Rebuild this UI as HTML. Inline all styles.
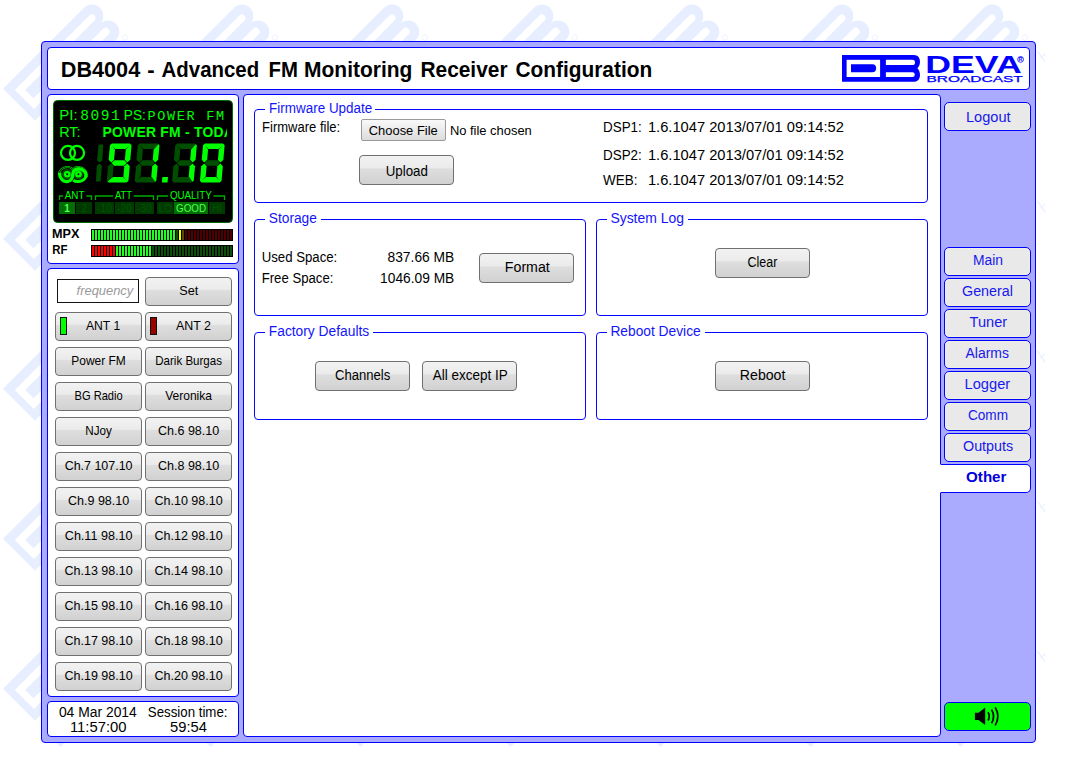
<!DOCTYPE html>
<html><head><meta charset="utf-8"><title>DB4004</title>
<style>
*{box-sizing:border-box;margin:0;padding:0}
html,body{width:1077px;height:784px;overflow:hidden;background:#fff}
body{font-family:"Liberation Sans",sans-serif;font-size:13px;color:#000;position:relative}
#wm,#tx{position:absolute;left:0;top:0;width:1077px;height:784px}
#wrap{position:absolute;left:41px;top:41px;width:995px;height:702px;background:#aaaaff;border:1px solid #0000ff;border-radius:4px}
.box{position:absolute;background:#fff;border:1px solid #0000ff;border-radius:4px}
.btn{position:absolute;height:29px;width:87px;border:1px solid #707070;border-radius:4px;background:linear-gradient(#f2f2f2 0%,#ebebeb 42%,#dedede 46%,#d1d1d1 100%)}
.btn.big{width:95px;height:30px}
.nav{position:absolute;left:944px;width:87px;height:29px;background:#e9e9e9;border:1px solid #0000ff;border-radius:5px;box-shadow:inset 0 0 0 1px #efefe4}
.fs{position:absolute;border:1px solid #0606ff;border-radius:4px}
.lg{position:absolute;background:#fff;height:4px}
.led{position:absolute;width:6.5px;height:18px;border:1px solid #111}
</style></head><body>
<svg id="wm" width="1077" height="784"><defs><pattern id="wmp" width="150" height="150" patternUnits="userSpaceOnUse"><g transform="translate(3,88.8) rotate(-45) scale(1.6)"><path d="M0,0 H71.63 A7.07 7.07 0 0 1 71.63,14.14 A7.07 7.07 0 0 1 71.63,28.28 H0 Z" fill="#e7eeff"/><rect x="4.7" y="5.75" width="33.5" height="16.85" fill="#fff"/><path d="M9.3,10.3 H30.5 A3.7 3.7 0 0 1 30.5,17.7 H9.3 Z" fill="#e7eeff"/><path d="M44,5.75 H70.6 A2.28 2.28 0 0 1 70.6,10.3 H44 Z" fill="#fff"/><path d="M44,17.7 H70.6 A2.45 2.45 0 0 1 70.6,22.6 H44 Z" fill="#fff"/><circle cx="76.5" cy="31.2" r="1.7" fill="none" stroke="#e7eeff" stroke-width="0.5"/></g><polygon points="55.6,141.9 65.6,141.9 60.6,146.9" fill="#e7eeff"/><path d="M137.2,50.8 L145.2,62 M145.3,53.8 L140.4,58.2" stroke="#edf2ff" stroke-width="1.5" fill="none"/></pattern></defs><rect width="1050" height="750" fill="url(#wmp)"/></svg>
<div id="wrap"></div>
<div class="box" style="left:47px;top:47px;width:983px;height:43px;"></div>
<svg style="position:absolute;left:836px;top:50px" width="194" height="38" viewBox="836 50 194 38" font-family="Liberation Sans, sans-serif"><path d="M842,55 H914 C917.6,55 920,57.8 920,61.5 C920,65 918.6,67.2 917.3,68.2 C918.6,69.2 920,71.5 920,75 C920,79 917.5,81.8 914,81.8 H842 Z" fill="#0000ff"/><rect x="846.6" y="59.8" width="33.5" height="17.2" fill="#fff"/><path d="M851,64.3 H872.5 A3.6 4 0 0 1 872.5,72.3 H851 Z" fill="#0000ff"/><path d="M885.9,59.8 H912.4 A2.6 2.6 0 0 1 912.4,65 H885.9 Z" fill="#fff"/><path d="M885.9,72.3 H912.4 A2.4 2.35 0 0 1 912.4,77 H885.9 Z" fill="#fff"/><text x="925.3" y="72.8" font-size="24.4" font-weight="bold" fill="#0000ff" textLength="96.5" lengthAdjust="spacingAndGlyphs">DEVA</text><text x="926.4" y="81.9" font-size="8.6" fill="#0000ff" stroke="#0000ff" stroke-width="0.25" textLength="96.4" lengthAdjust="spacingAndGlyphs">BROADCAST</text><circle cx="1020.6" cy="59.4" r="2.9" fill="#fff" stroke="#0000ff" stroke-width="0.8"/><text x="1020.6" y="61.2" font-size="5" font-weight="bold" fill="#0000ff" text-anchor="middle">R</text></svg>

<div class="box" style="left:47px;top:94px;width:192px;height:170px;"></div>
<div class="box" style="left:47px;top:268px;width:192px;height:429px;"></div>
<div class="box" style="left:47px;top:701px;width:192px;height:36px;"></div>
<div class="box" style="left:243px;top:94px;width:698px;height:643px;"></div>
<svg style="position:absolute;left:53px;top:100px" width="180" height="123" viewBox="53 100 180 123" font-family="Liberation Sans, sans-serif"><rect x="53.5" y="100.5" width="179" height="122" rx="4" fill="#000" stroke="#006a00" stroke-width="1"/><text x="59.2" y="119.8" font-size="14.5" fill="#00ff00" textLength="18.4" lengthAdjust="spacingAndGlyphs">PI:</text><text x="80.2" y="119.8" font-size="14.5" fill="#00ff00" font-family="Liberation Mono, monospace" letter-spacing="1.6">8091</text><text x="123.8" y="119.8" font-size="14.5" fill="#00ff00" textLength="22" lengthAdjust="spacingAndGlyphs">PS:</text><text x="147.4" y="119.8" font-size="13.5" fill="#00ff00" font-family="Liberation Mono, monospace" letter-spacing="1.7">POWER FM</text><text x="59.2" y="136.7" font-size="14.2" fill="#00ff00" textLength="21.4" lengthAdjust="spacingAndGlyphs">RT:</text><clipPath id="rtc"><rect x="100" y="122" width="127" height="20"/></clipPath><text x="102.5" y="137" font-size="13.9" letter-spacing="0.25" font-weight="bold" fill="#00ff00" clip-path="url(#rtc)">POWER FM - TODAY</text><circle cx="68" cy="152.9" r="7" fill="none" stroke="#00ff00" stroke-width="2.2"/><circle cx="77" cy="152.9" r="7" fill="none" stroke="#00ff00" stroke-width="2.2"/><path d="M58.300000000000004 175.3 A8.9 8.9 0 0 1 74.9 170.9" fill="none" stroke="#00b000" stroke-width="1"/><path d="M70.7 170.9 A8.9 8.9 0 0 1 87.30000000000001 175.3" fill="none" stroke="#00b000" stroke-width="1"/><path d="M60.1 175.3 A7.1 7.1 0 0 1 73.1 170.9" fill="none" stroke="#00b000" stroke-width="1"/><path d="M72.50000000000001 170.9 A7.1 7.1 0 0 1 85.5 175.3" fill="none" stroke="#00b000" stroke-width="1"/><circle cx="67.2" cy="174.3" r="5.2" fill="#005000"/><circle cx="78.4" cy="174.3" r="5.2" fill="#005000"/><path d="M86.0,177 C86.6,171.5 82.5,168.8 78.6,169.0 C74.2,169.3 72.9,172 72.8,174.3 C72.7,177.5 71.2,181.4 67.2,181.6 C62.5,181.8 59.4,177.5 59.6,172.8" fill="none" stroke="#00ff00" stroke-width="3.3"/><path d="M73.2,180.3 C76,182.3 84.5,182.6 86.2,175.5" fill="none" stroke="#00ff00" stroke-width="3"/><circle cx="67.2" cy="174.3" r="3.3" fill="#00ff00"/><circle cx="67.2" cy="174.3" r="1.0" fill="#000"/><circle cx="78.4" cy="174.3" r="3.3" fill="#00ff00"/><circle cx="78.4" cy="174.3" r="1.0" fill="#000"/><polygon points="98.6,144.6 103.3,144.6 102.3,160.5 99.6,162.6 97.1,160.5" fill="#004f00"/><polygon points="99.4,163.6 101.9,165.7 100.6,181.4 95.9,181.4 96.9,165.7" fill="#004f00"/><polygon points="111.84,143.60 129.94,143.60 130.95,144.70 125.37,149.00 115.47,149.00 110.65,144.70" fill="#00ff00"/><polygon points="108.45,182.40 126.55,182.40 127.75,181.30 122.92,177.00 113.02,177.00 107.45,181.30" fill="#00ff00"/><polygon points="109.94,145.35 111.14,144.25 114.98,149.45 114.07,159.85 111.14,162.55 108.67,159.85" fill="#00ff00"/><polygon points="131.54,145.35 130.54,144.25 125.78,149.45 124.87,159.85 127.34,162.55 130.27,159.85" fill="#00ff00"/><polygon points="106.85,180.65 107.86,181.75 112.61,176.55 113.52,166.15 111.06,163.45 108.12,166.15" fill="#004f00"/><polygon points="128.45,180.65 127.26,181.75 123.41,176.55 124.32,166.15 127.26,163.45 129.72,166.15" fill="#00ff00"/><polygon points="111.55,163.00 114.48,160.30 124.38,160.30 126.85,163.00 123.91,165.70 114.01,165.70" fill="#00ff00"/><polygon points="139.74,143.60 157.84,143.60 158.85,144.70 153.27,149.00 143.37,149.00 138.55,144.70" fill="#004f00"/><polygon points="136.35,182.40 154.45,182.40 155.65,181.30 150.82,177.00 140.92,177.00 135.35,181.30" fill="#004f00"/><polygon points="137.84,145.35 139.04,144.25 142.88,149.45 141.97,159.85 139.04,162.55 136.57,159.85" fill="#004f00"/><polygon points="159.44,145.35 158.44,144.25 153.68,149.45 152.77,159.85 155.24,162.55 158.17,159.85" fill="#00ff00"/><polygon points="134.75,180.65 135.76,181.75 140.51,176.55 141.42,166.15 138.96,163.45 136.02,166.15" fill="#004f00"/><polygon points="156.35,180.65 155.16,181.75 151.31,176.55 152.22,166.15 155.16,163.45 157.62,166.15" fill="#00ff00"/><polygon points="139.45,163.00 142.38,160.30 152.28,160.30 154.75,163.00 151.81,165.70 141.91,165.70" fill="#004f00"/><polygon points="177.14,143.60 195.24,143.60 196.25,144.70 190.67,149.00 180.77,149.00 175.95,144.70" fill="#004f00"/><polygon points="173.75,182.40 191.85,182.40 193.05,181.30 188.22,177.00 178.32,177.00 172.75,181.30" fill="#004f00"/><polygon points="175.24,145.35 176.44,144.25 180.28,149.45 179.37,159.85 176.44,162.55 173.97,159.85" fill="#004f00"/><polygon points="196.84,145.35 195.84,144.25 191.08,149.45 190.17,159.85 192.64,162.55 195.57,159.85" fill="#00ff00"/><polygon points="172.15,180.65 173.16,181.75 177.91,176.55 178.82,166.15 176.36,163.45 173.42,166.15" fill="#004f00"/><polygon points="193.75,180.65 192.56,181.75 188.71,176.55 189.62,166.15 192.56,163.45 195.02,166.15" fill="#00ff00"/><polygon points="176.85,163.00 179.78,160.30 189.68,160.30 192.15,163.00 189.21,165.70 179.31,165.70" fill="#004f00"/><polygon points="204.94,143.60 223.04,143.60 224.05,144.70 218.47,149.00 208.57,149.00 203.75,144.70" fill="#00ff00"/><polygon points="201.55,182.40 219.65,182.40 220.85,181.30 216.02,177.00 206.12,177.00 200.55,181.30" fill="#00ff00"/><polygon points="203.04,145.35 204.24,144.25 208.08,149.45 207.17,159.85 204.24,162.55 201.77,159.85" fill="#00ff00"/><polygon points="224.64,145.35 223.64,144.25 218.88,149.45 217.97,159.85 220.44,162.55 223.37,159.85" fill="#00ff00"/><polygon points="199.95,180.65 200.96,181.75 205.71,176.55 206.62,166.15 204.16,163.45 201.22,166.15" fill="#00ff00"/><polygon points="221.55,180.65 220.36,181.75 216.51,176.55 217.42,166.15 220.36,163.45 222.82,166.15" fill="#00ff00"/><polygon points="204.65,163.00 207.58,160.30 217.48,160.30 219.95,163.00 217.01,165.70 207.11,165.70" fill="#004f00"/><polygon points="162.4,176.9 168,176.9 167.5,182.4 161.9,182.4" fill="#00ff00"/><path d="M59.5 200 V196 H63 M86.3 196 H91.5 V200" fill="none" stroke="#00aa00" stroke-width="1.3"/><text x="64.8" y="199.2" font-size="11.3" fill="#00ff00" textLength="19.699999999999996" lengthAdjust="spacingAndGlyphs">ANT</text><path d="M95.5 200 V196 H113.1 M133.8 196 H153.5 V200" fill="none" stroke="#00aa00" stroke-width="1.3"/><text x="114.89999999999999" y="199.2" font-size="11.3" fill="#00ff00" textLength="17.100000000000016" lengthAdjust="spacingAndGlyphs">ATT</text><path d="M157.5 200 V196 H168.1 M213.5 196 H224.5 V200" fill="none" stroke="#00aa00" stroke-width="1.3"/><text x="169.9" y="199.2" font-size="11.3" fill="#00ff00" textLength="41.800000000000004" lengthAdjust="spacingAndGlyphs">QUALITY</text><rect x="59" y="202" width="16" height="12" fill="#006e00"/><text x="67.0" y="211.8" font-size="10" font-weight="bold" fill="#55ff55" text-anchor="middle">1</text><rect x="76" y="202" width="16" height="12" fill="#003a00"/><text x="84.0" y="211.8" font-size="10" font-weight="normal" fill="#005400" text-anchor="middle">2</text><rect x="95" y="202" width="19" height="12" fill="#003a00"/><text x="104.5" y="211.8" font-size="10" font-weight="normal" fill="#005400" text-anchor="middle">-10</text><rect x="115" y="202" width="19" height="12" fill="#003a00"/><text x="124.5" y="211.8" font-size="10" font-weight="normal" fill="#005400" text-anchor="middle">-20</text><rect x="135" y="202" width="19" height="12" fill="#003a00"/><text x="144.5" y="211.8" font-size="10" font-weight="normal" fill="#005400" text-anchor="middle">-30</text><rect x="157" y="202" width="16.5" height="12" fill="#003a00"/><text x="165.25" y="211.8" font-size="10" font-weight="normal" fill="#005400" text-anchor="middle">LO</text><rect x="174" y="202" width="34" height="12" fill="#006e00"/><text x="191.0" y="211.8" font-size="10.6" font-weight="normal" fill="#55ff55" text-anchor="middle" textLength="30" lengthAdjust="spacingAndGlyphs">GOOD</text><rect x="209" y="202" width="16" height="12" fill="#003a00"/><text x="217.0" y="211.8" font-size="10" font-weight="normal" fill="#005400" text-anchor="middle">HI</text></svg>
<div style="position:absolute;left:91px;top:229px;width:142px;height:12px;background:#000"></div>
<div style="position:absolute;left:92px;top:230px;width:84px;height:10px;background:repeating-linear-gradient(90deg,#22ff22 0,#22ff22 2px,#000 2px,#000 3px)"></div>
<div style="position:absolute;left:176px;top:230px;width:3px;height:10px;background:repeating-linear-gradient(90deg,#0b4f0b 0,#0b4f0b 2px,#000 2px,#000 3px)"></div>
<div style="position:absolute;left:179px;top:230px;width:3px;height:10px;background:repeating-linear-gradient(90deg,#ffff00 0,#ffff00 2px,#000 2px,#000 3px)"></div>
<div style="position:absolute;left:182px;top:230px;width:3px;height:10px;background:repeating-linear-gradient(90deg,#555000 0,#555000 2px,#000 2px,#000 3px)"></div>
<div style="position:absolute;left:185px;top:230px;width:48px;height:10px;background:repeating-linear-gradient(90deg,#500000 0,#500000 2px,#000 2px,#000 3px)"></div>
<div style="position:absolute;left:91px;top:245px;width:142px;height:12px;background:#000"></div>
<div style="position:absolute;left:92px;top:246px;width:24px;height:10px;background:repeating-linear-gradient(90deg,#ff0000 0,#ff0000 2px,#000 2px,#000 3px)"></div>
<div style="position:absolute;left:116px;top:246px;width:36px;height:10px;background:repeating-linear-gradient(90deg,#22ff22 0,#22ff22 2px,#000 2px,#000 3px)"></div>
<div style="position:absolute;left:152px;top:246px;width:81px;height:10px;background:repeating-linear-gradient(90deg,#0b4f0b 0,#0b4f0b 2px,#000 2px,#000 3px)"></div>
<svg style="position:absolute;left:50px;top:226px" width="40" height="34" viewBox="50 226 40 34" font-family="Liberation Sans, sans-serif" font-weight="bold" font-size="12"><text x="52" y="238" textLength="27.4" lengthAdjust="spacingAndGlyphs">MPX</text><text x="52.2" y="254" textLength="15.2" lengthAdjust="spacingAndGlyphs">RF</text></svg>

<div style="position:absolute;left:57px;top:279px;width:82px;height:24px;border:1px solid #141414;background:#fff"></div>
<div class="btn " style="left:145px;top:277px"></div>
<div class="btn " style="left:55px;top:312px"></div>
<div class="led" style="left:60px;top:317px;background:#00ff00"></div>
<div class="btn " style="left:145px;top:312px"></div>
<div class="led" style="left:150px;top:317px;background:#990000"></div>
<div class="btn " style="left:55px;top:347px"></div>
<div class="btn " style="left:145px;top:347px"></div>
<div class="btn " style="left:55px;top:382px"></div>
<div class="btn " style="left:145px;top:382px"></div>
<div class="btn " style="left:55px;top:417px"></div>
<div class="btn " style="left:145px;top:417px"></div>
<div class="btn " style="left:55px;top:452px"></div>
<div class="btn " style="left:145px;top:452px"></div>
<div class="btn " style="left:55px;top:487px"></div>
<div class="btn " style="left:145px;top:487px"></div>
<div class="btn " style="left:55px;top:522px"></div>
<div class="btn " style="left:145px;top:522px"></div>
<div class="btn " style="left:55px;top:557px"></div>
<div class="btn " style="left:145px;top:557px"></div>
<div class="btn " style="left:55px;top:592px"></div>
<div class="btn " style="left:145px;top:592px"></div>
<div class="btn " style="left:55px;top:627px"></div>
<div class="btn " style="left:145px;top:627px"></div>
<div class="btn " style="left:55px;top:662px"></div>
<div class="btn " style="left:145px;top:662px"></div>
<div class="fs" style="left:254px;top:109px;width:674px;height:94px"></div><div class="lg" style="left:265px;top:108px;width:110.39999999999998px"></div>
<div class="fs" style="left:254px;top:219px;width:332px;height:97px"></div><div class="lg" style="left:265px;top:218px;width:56.10000000000002px"></div>
<div class="fs" style="left:596px;top:219px;width:332px;height:97px"></div><div class="lg" style="left:607px;top:218px;width:81px"></div>
<div class="fs" style="left:254px;top:332px;width:332px;height:88px"></div><div class="lg" style="left:265px;top:331px;width:108.10000000000002px"></div>
<div class="fs" style="left:596px;top:332px;width:332px;height:88px"></div><div class="lg" style="left:607px;top:331px;width:98.29999999999995px"></div>
<div style="position:absolute;left:361px;top:119px;width:85px;height:22px;border:1px solid #9a9a9a;border-radius:2px;background:linear-gradient(#f9f9f9,#dcdcdc)"></div>
<div class="btn big" style="left:359px;top:155px"></div>
<div class="btn big" style="left:479px;top:253px"></div>
<div class="btn big" style="left:715px;top:248px"></div>
<div class="btn big" style="left:315px;top:361px"></div>
<div class="btn big" style="left:422px;top:361px"></div>
<div class="btn big" style="left:715px;top:361px"></div>
<div class="nav" style="top:102px"></div>
<div class="nav" style="top:247px"></div>
<div class="nav" style="top:278px"></div>
<div class="nav" style="top:309px"></div>
<div class="nav" style="top:340px"></div>
<div class="nav" style="top:371px"></div>
<div class="nav" style="top:402px"></div>
<div class="nav" style="top:433px"></div>
<div class="nav" style="left:940px;width:91px;top:464px;background:#fff;border-left:1px solid #fff;border-radius:0 5px 5px 0;box-shadow:none"></div>
<div class="nav" style="top:702px;background:#00ff00;box-shadow:none"><svg style="position:absolute;left:26px;top:2px" width="32" height="24" viewBox="971 705 32 24"><path d="M974.9,712.8 H978.5 L985.2,707.6 V725.1 L978.5,719.9 H974.9 Z" fill="#000"/><path d="M988,712.3 Q990.6,716.4 988,720.5 M991.6,709.6 Q995.6,716.4 991.6,723.2 M995.2,707.4 Q1000.6,716.4 995.2,725.4" fill="none" stroke="#000" stroke-width="1.7" stroke-linecap="butt"/></svg></div>
<svg id="tx" width="1077" height="784" font-family="Liberation Sans, sans-serif" font-size="14" fill="#000">
<text y="76.8" font-size="21.4" font-weight="bold" x="60.8" textLength="79.4" lengthAdjust="spacingAndGlyphs">DB4004</text>
<text y="76.8" font-size="21.4" font-weight="bold" x="147.2" textLength="7.4" lengthAdjust="spacingAndGlyphs">-</text>
<text y="76.8" font-size="21.4" font-weight="bold" x="161.6" textLength="97.5" lengthAdjust="spacingAndGlyphs">Advanced</text>
<text y="76.8" font-size="21.4" font-weight="bold" x="268.6" textLength="29.4" lengthAdjust="spacingAndGlyphs">FM</text>
<text y="76.8" font-size="21.4" font-weight="bold" x="304.1" textLength="108.2" lengthAdjust="spacingAndGlyphs">Monitoring</text>
<text y="76.8" font-size="21.4" font-weight="bold" x="420.5" textLength="87.0" lengthAdjust="spacingAndGlyphs">Receiver</text>
<text y="76.8" font-size="21.4" font-weight="bold" x="515.4" textLength="136.8" lengthAdjust="spacingAndGlyphs">Configuration</text>
<text y="294.7" font-size="13.3" font-style="italic" fill="#9a9a9a" x="76.6" textLength="56.7" lengthAdjust="spacingAndGlyphs">frequency</text>
<text y="294.8" font-size="12.6" x="188.7" text-anchor="middle" textLength="19.0" lengthAdjust="spacingAndGlyphs">Set</text>
<text y="329.8" font-size="12.6" x="103.1" text-anchor="middle" textLength="34.2" lengthAdjust="spacingAndGlyphs">ANT 1</text>
<text y="329.8" font-size="12.6" x="193.5" text-anchor="middle" textLength="35.0" lengthAdjust="spacingAndGlyphs">ANT 2</text>
<text y="364.7" font-size="12.6" x="98.6" text-anchor="middle" textLength="54.5" lengthAdjust="spacingAndGlyphs">Power FM</text>
<text y="364.7" font-size="12.6" x="188.6" text-anchor="middle" textLength="66.6" lengthAdjust="spacingAndGlyphs">Darik Burgas</text>
<text y="399.7" font-size="12.6" x="98.6" text-anchor="middle" textLength="48.1" lengthAdjust="spacingAndGlyphs">BG Radio</text>
<text y="399.7" font-size="12.6" x="188.6" text-anchor="middle" textLength="46.8" lengthAdjust="spacingAndGlyphs">Veronika</text>
<text y="434.7" font-size="12.6" x="98.6" text-anchor="middle" textLength="26.6" lengthAdjust="spacingAndGlyphs">NJoy</text>
<text y="434.7" font-size="12.6" x="188.6" text-anchor="middle" textLength="61.3" lengthAdjust="spacingAndGlyphs">Ch.6 98.10</text>
<text y="469.7" font-size="12.6" x="98.6" text-anchor="middle" textLength="67.9" lengthAdjust="spacingAndGlyphs">Ch.7 107.10</text>
<text y="469.7" font-size="12.6" x="188.6" text-anchor="middle" textLength="61.3" lengthAdjust="spacingAndGlyphs">Ch.8 98.10</text>
<text y="504.7" font-size="12.6" x="98.6" text-anchor="middle" textLength="61.3" lengthAdjust="spacingAndGlyphs">Ch.9 98.10</text>
<text y="504.7" font-size="12.6" x="188.6" text-anchor="middle" textLength="68.3" lengthAdjust="spacingAndGlyphs">Ch.10 98.10</text>
<text y="539.7" font-size="12.6" x="98.6" text-anchor="middle" textLength="67.6" lengthAdjust="spacingAndGlyphs">Ch.11 98.10</text>
<text y="539.7" font-size="12.6" x="188.6" text-anchor="middle" textLength="68.3" lengthAdjust="spacingAndGlyphs">Ch.12 98.10</text>
<text y="574.7" font-size="12.6" x="98.6" text-anchor="middle" textLength="68.3" lengthAdjust="spacingAndGlyphs">Ch.13 98.10</text>
<text y="574.7" font-size="12.6" x="188.6" text-anchor="middle" textLength="68.3" lengthAdjust="spacingAndGlyphs">Ch.14 98.10</text>
<text y="609.7" font-size="12.6" x="98.6" text-anchor="middle" textLength="68.3" lengthAdjust="spacingAndGlyphs">Ch.15 98.10</text>
<text y="609.7" font-size="12.6" x="188.6" text-anchor="middle" textLength="68.3" lengthAdjust="spacingAndGlyphs">Ch.16 98.10</text>
<text y="644.7" font-size="12.6" x="98.6" text-anchor="middle" textLength="68.3" lengthAdjust="spacingAndGlyphs">Ch.17 98.10</text>
<text y="644.7" font-size="12.6" x="188.6" text-anchor="middle" textLength="68.3" lengthAdjust="spacingAndGlyphs">Ch.18 98.10</text>
<text y="679.7" font-size="12.6" x="98.6" text-anchor="middle" textLength="68.3" lengthAdjust="spacingAndGlyphs">Ch.19 98.10</text>
<text y="679.7" font-size="12.6" x="188.6" text-anchor="middle" textLength="68.3" lengthAdjust="spacingAndGlyphs">Ch.20 98.10</text>
<text y="716.7" font-size="13.8" x="58.9" textLength="77.9" lengthAdjust="spacingAndGlyphs">04 Mar 2014</text>
<text y="731.7" font-size="13.8" x="69.9" textLength="56.6" lengthAdjust="spacingAndGlyphs">11:57:00</text>
<text y="716.7" font-size="13.8" x="147.8" textLength="79.7" lengthAdjust="spacingAndGlyphs">Session time:</text>
<text y="731.7" font-size="13.8" x="170.0" textLength="36.9" lengthAdjust="spacingAndGlyphs">59:54</text>
<text y="112.7" font-size="14" fill="#1414fa" x="269.1" textLength="103.2" lengthAdjust="spacingAndGlyphs">Firmware Update</text>
<text y="222.7" font-size="14" fill="#1414fa" x="268.8" textLength="48.1" lengthAdjust="spacingAndGlyphs">Storage</text>
<text y="222.7" font-size="14" fill="#1414fa" x="610.4" textLength="73.6" lengthAdjust="spacingAndGlyphs">System Log</text>
<text y="335.7" font-size="14" fill="#1414fa" x="268.8" textLength="100.4" lengthAdjust="spacingAndGlyphs">Factory Defaults</text>
<text y="335.7" font-size="14" fill="#1414fa" x="610.4" textLength="90.3" lengthAdjust="spacingAndGlyphs">Reboot Device</text>
<text y="131.8" font-size="14" x="262.1" textLength="78.1" lengthAdjust="spacingAndGlyphs">Firmware file:</text>
<text y="134.8" font-size="13.33" x="368.8" textLength="68.9" lengthAdjust="spacingAndGlyphs">Choose File</text>
<text y="134.8" font-size="13.33" x="449.9" textLength="81.9" lengthAdjust="spacingAndGlyphs">No file chosen</text>
<text y="175.6" font-size="14" x="406.8" text-anchor="middle" textLength="42.2" lengthAdjust="spacingAndGlyphs">Upload</text>
<text y="131.8" font-size="14" x="603.0" textLength="38.8" lengthAdjust="spacingAndGlyphs">DSP1:</text>
<text y="131.8" font-size="14" x="647.9" textLength="196.0" lengthAdjust="spacingAndGlyphs">1.6.1047 2013/07/01 09:14:52</text>
<text y="159.6" font-size="14" x="603.0" textLength="38.8" lengthAdjust="spacingAndGlyphs">DSP2:</text>
<text y="159.6" font-size="14" x="647.9" textLength="196.0" lengthAdjust="spacingAndGlyphs">1.6.1047 2013/07/01 09:14:52</text>
<text y="185.2" font-size="14" x="603.0" textLength="34.4" lengthAdjust="spacingAndGlyphs">WEB:</text>
<text y="185.2" font-size="14" x="647.9" textLength="196.0" lengthAdjust="spacingAndGlyphs">1.6.1047 2013/07/01 09:14:52</text>
<text y="262.4" font-size="14" x="261.7" textLength="75.6" lengthAdjust="spacingAndGlyphs">Used Space:</text>
<text y="262.4" font-size="14" x="387.5" textLength="66.8" lengthAdjust="spacingAndGlyphs">837.66 MB</text>
<text y="283.1" font-size="14" x="261.7" textLength="71.7" lengthAdjust="spacingAndGlyphs">Free Space:</text>
<text y="283.1" font-size="14" x="380.1" textLength="74.2" lengthAdjust="spacingAndGlyphs">1046.09 MB</text>
<text y="271.8" font-size="14" x="527.3" text-anchor="middle" textLength="44.9" lengthAdjust="spacingAndGlyphs">Format</text>
<text y="267.1" font-size="14" x="762.5" text-anchor="middle" textLength="29.8" lengthAdjust="spacingAndGlyphs">Clear</text>
<text y="380" font-size="14" x="362.7" text-anchor="middle" textLength="55.2" lengthAdjust="spacingAndGlyphs">Channels</text>
<text y="380" font-size="14" x="470.2" text-anchor="middle" textLength="74.9" lengthAdjust="spacingAndGlyphs">All except IP</text>
<text y="380" font-size="14" x="762.6" text-anchor="middle" textLength="45.5" lengthAdjust="spacingAndGlyphs">Reboot</text>
<text y="121.8" font-size="14.2" fill="#1818ee" x="966.0" textLength="44.6" lengthAdjust="spacingAndGlyphs">Logout</text>
<text y="264.8" font-size="14" fill="#1818ee" x="973.0" textLength="30.1" lengthAdjust="spacingAndGlyphs">Main</text>
<text y="295.8" font-size="14" fill="#1818ee" x="962.0" textLength="51.0" lengthAdjust="spacingAndGlyphs">General</text>
<text y="326.8" font-size="14" fill="#1818ee" x="969.6" textLength="37.6" lengthAdjust="spacingAndGlyphs">Tuner</text>
<text y="357.8" font-size="14" fill="#1818ee" x="965.5" textLength="43.4" lengthAdjust="spacingAndGlyphs">Alarms</text>
<text y="388.8" font-size="14" fill="#1818ee" x="964.5" textLength="45.7" lengthAdjust="spacingAndGlyphs">Logger</text>
<text y="419.8" font-size="14" fill="#1818ee" x="967.9" textLength="40.1" lengthAdjust="spacingAndGlyphs">Comm</text>
<text y="450.8" font-size="14" fill="#1818ee" x="963.0" textLength="50.2" lengthAdjust="spacingAndGlyphs">Outputs</text>
<text y="481.6" font-size="14" font-weight="bold" fill="#0000e0" x="966.1" textLength="40.3" lengthAdjust="spacingAndGlyphs">Other</text>
</svg>
</body></html>
